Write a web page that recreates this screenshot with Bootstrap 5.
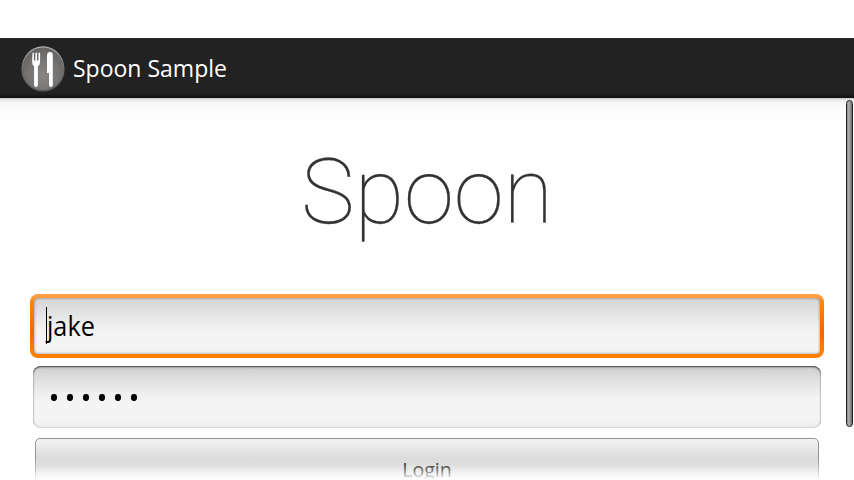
<!DOCTYPE html>
<html lang="en">
<head>
<meta charset="utf-8">
<meta name="viewport" content="width=device-width, initial-scale=1">
<title>Spoon Sample</title>
<link rel="stylesheet" href="https://cdn.jsdelivr.net/npm/bootstrap@5.3.0/dist/css/bootstrap.min.css">
<style>
body{height:480px;font-family:"Open Sans","Noto Sans",sans-serif;color:#000;background:#fff}
.status-space{height:38px}
.action-bar{height:60px;padding:0 0 0 21px;background:linear-gradient(#2a2a2a 0,#222 2px,#222 56px,#161616 58px,#111 60px)}
.app-icon{width:44px;height:46px;margin:1px 8px 0 0}
.app-title{font-size:24.5px;line-height:34px;color:#fff;transform:scaleX(.939);transform-origin:0 50%}
.screen{height:382px;background:linear-gradient(#c8c8c8 0,#e8e8e8 2px,#f6f6f6 5px,#fbfbfb 10px,#fff 24px)}
.hero{height:196px;padding-top:41px;font-family:Roboto,sans-serif;font-weight:100;font-size:90.5px;line-height:107px;color:#333;-webkit-text-stroke:.25px #333}
.field{height:64px;margin:0 30px;padding-left:12px;font-size:27px;border:4px solid transparent;border-radius:8px;
background:linear-gradient(#d6d6d6 0,#e0e0e0 12px,#ebebeb 23px,#f4f4f4 34px,#f4f4f4 100%) padding-box,linear-gradient(#ffa04a 0,#ff9a3c 4px,#ff8609 7px,#f06800 60%,#ff7d00 90%) border-box}
.field-well{position:absolute;inset:0;border-radius:4px;box-shadow:inset 0 0 3px rgba(0,0,0,.45)}
.caret{width:1px;height:37px;background:#000;margin-top:-1px}
.field-text{transform:scaleX(.935);transform-origin:0 50%;margin-left:-.5px}
.secret{height:62px;margin:8px 33px 0;padding-left:18px;border-radius:8px;gap:10px;background:linear-gradient(#cecece 0,#dadada 9px,#e8e8e8 21px,#f4f4f4 34px,#f4f4f4 54px,#eee 100%);box-shadow:inset 0 1px 1px #555,inset 0 2px 2px rgba(0,0,0,.15),inset 0 0 2px rgba(0,0,0,.35)}
.pip{width:6px;height:7px;border-radius:45%;background:#000;margin-top:1px}
.login{height:60px;margin:10px 35px 0;padding:1px 0 0;border:1px solid #929292;border-radius:5px;background:linear-gradient(#f3f3f3 0,#ececec 6px,#e1e1e1 15px,#d3d3d3 25px,#dcdcdc 32px,#eee 48px);font-size:20.5px;line-height:28px;color:#000}
.login-label{transform:scaleX(.955)}
.fade-edge{height:22px;background:linear-gradient(rgba(255,255,255,0),rgba(255,255,255,.4) 50%,#fff)}
.scroll-thumb{top:100px;right:1px;width:7px;height:327px;border-radius:4px;border:1px solid #222;background:linear-gradient(90deg,#888,#b0b0b0 35%,#999 60%,#666)}
</style>
<script src="https://cdn.jsdelivr.net/npm/bootstrap@5.3.0/dist/js/bootstrap.bundle.min.js"></script>
</head>
<body class="m-0 overflow-hidden position-relative">
<div class="status-space"></div>
<header class="action-bar d-flex align-items-center">
<svg class="app-icon" viewBox="0 0 44 46" aria-hidden="true">
<defs><radialGradient id="disc" cx=".5" cy=".65" r=".6"><stop offset="0" stop-color="#8a8886"/><stop offset="1" stop-color="#666564"/></radialGradient>
<linearGradient id="rim" x1="0" y1="0" x2="0" y2="1"><stop offset="0" stop-color="#b5b5b5"/><stop offset=".4" stop-color="#777"/><stop offset="1" stop-color="#555"/></linearGradient></defs>
<ellipse cx="22" cy="22.9" rx="20.9" ry="22" fill="url(#disc)" stroke="url(#rim)" stroke-width="1.3"/>
<path fill="#fff" d="M11.5 7q.7-1 1.4 0v7.5h1.5V7q.8-1 1.6 0v7.5h1.5V7q.8-1 1.6 0v8.8q0 3.4-2.2 4.2v19q-.2 2-1.9 2t-1.9-2V20q-2-.8-2-4.2zM26 9q.4-3 3-3 2.6 0 2.8 3v30q-.2 2-1.9 2T28 39V27h-2z"/>
</svg>
<span class="app-title">Spoon Sample</span>
</header>
<main class="screen d-flex flex-column">
<h1 class="hero text-center m-0 flex-shrink-0">Spoon</h1>
<div class="field d-flex align-items-center position-relative flex-shrink-0"><div class="field-well"></div><span class="caret"></span><span class="field-text">jake</span></div>
<div class="secret d-flex align-items-center flex-shrink-0"><span class="pip"></span><span class="pip"></span><span class="pip"></span><span class="pip"></span><span class="pip"></span><span class="pip"></span></div>
<button class="login flex-shrink-0 text-center" type="button"><span class="login-label d-inline-block">Login</span></button>
</main>
<div class="fade-edge position-absolute bottom-0 start-0 w-100"></div>
<div class="scroll-thumb position-absolute"></div>
</body>
</html>
